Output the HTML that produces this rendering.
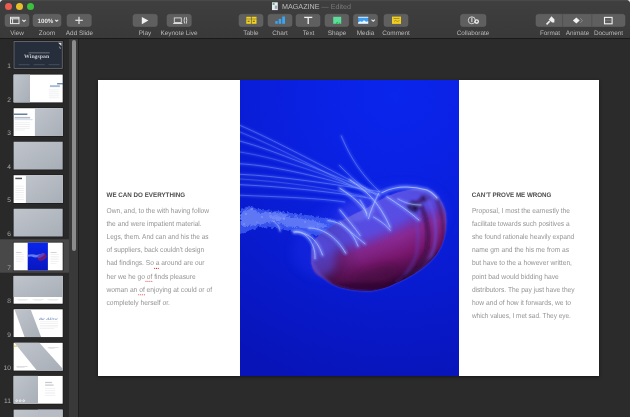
<!DOCTYPE html>
<html><head><meta charset="utf-8">
<style>
*{margin:0;padding:0;box-sizing:border-box}
html,body{text-rendering:geometricPrecision;width:630px;height:417px;overflow:hidden;background:#2b2b2b;font-family:"Liberation Sans",sans-serif}
.abs{position:absolute;will-change:transform}
#tb{position:absolute;left:0;top:0;width:630px;height:38px;background:linear-gradient(#3f3f3f,#393939)}
#tbline{position:absolute;left:0;top:38px;width:630px;height:1px;background:#1a1a1a}
.light{position:absolute;top:3px;width:7px;height:7px;border-radius:50%}
.btn{position:absolute;top:14px;height:12px;border-radius:2.5px;background:#595959}
.lbl{position:absolute;top:29.6px;font-size:6.4px;color:#b8b8b8;white-space:nowrap;text-align:center;transform:translateX(-50%)}
#title{will-change:transform;position:absolute;left:282px;top:2.2px;font-size:7.2px;color:#bdbdbd;white-space:nowrap}
#title span{color:#7a7a7a}
#side{position:absolute;left:0;top:39px;width:69px;height:378px;background:#292929}
#track{position:absolute;left:69px;top:39px;width:9px;height:378px;background:#393939}
#sideborder{position:absolute;left:78px;top:39px;width:1px;height:378px;background:#1e1e1e}
#thumb{position:absolute;left:71.5px;top:40px;width:4.6px;height:211px;border-radius:2.5px;background:#8c8c8c}
.th{position:absolute;left:13px;width:50px;height:28px;overflow:hidden;background:#fff}
.num{position:absolute;font-size:8px;color:#9a9a9a;width:10px;text-align:right;left:1px}
.g{background:linear-gradient(160deg,#b9bec6,#a3a9b2)}
#slide{position:absolute;left:98px;top:80px;width:501px;height:296px;background:#fff;box-shadow:0 1px 3px rgba(0,0,0,.5)}
.h{position:absolute;font-weight:bold;font-size:7px;letter-spacing:-0.45px;color:#484848;white-space:nowrap}
.body{position:absolute;font-size:6.6px;line-height:13.1px;color:#8d8d8d;white-space:nowrap}
</style></head><body>
<div id="tb"></div>
<div id="tbline"></div>
<div class="light" style="left:4.5px;background:#ec5a50"></div>
<div class="light" style="left:15.5px;background:#e6bf2a"></div>
<div class="light" style="left:26.5px;background:#3bc13b"></div>
<div id="title"><span style="color:#bdbdbd">MAGAZINE</span> <span>— Edited</span></div>

<svg class="abs" style="left:0;top:0" width="630" height="38" viewBox="0 0 630 38">
<g fill="#5f5f5f" stroke="#666" stroke-width="0.5">
<rect x="5" y="14.3" width="24" height="12.2" rx="2.5"/>
<rect x="33" y="14.3" width="28" height="12.2" rx="2.5"/>
<rect x="67" y="14.3" width="24.3" height="12.2" rx="2.5"/>
<rect x="133" y="14.3" width="24.3" height="12.2" rx="2.5"/>
<rect x="167" y="14.3" width="24.3" height="12.2" rx="2.5"/>
<rect x="239" y="14.3" width="24" height="12.2" rx="2.5"/>
<rect x="268" y="14.3" width="24" height="12.2" rx="2.5"/>
<rect x="296" y="14.3" width="24" height="12.2" rx="2.5"/>
<rect x="325" y="14.3" width="23.7" height="12.2" rx="2.5"/>
<rect x="353.5" y="14.3" width="24" height="12.2" rx="2.5"/>
<rect x="384" y="14.3" width="24" height="12.2" rx="2.5"/>
<rect x="460.5" y="14.3" width="25.5" height="12.2" rx="2.5"/>
<rect x="536" y="14.3" width="89" height="12.2" rx="2.5"/>
</g>
<g stroke="#484848" stroke-width="0.6"><line x1="562.6" y1="14.3" x2="562.6" y2="26.5"/><line x1="591.8" y1="14.3" x2="591.8" y2="26.5"/></g>
<rect x="0" y="0" width="630" height="0.8" fill="#4d4d4d"/>
<path d="M0 0 L2.5 0 Q0.6 0.6 0 2.5 Z M630 0 L627.5 0 Q629.4 0.6 630 2.5 Z" fill="#e8e8e8"/>
<rect x="272" y="2.3" width="5.8" height="7.8" fill="#e9ecef"/><rect x="272.6" y="3.2" width="2" height="1.6" fill="#3aa87a"/><rect x="274.8" y="5.6" width="2.4" height="3.2" fill="#9aa8c0"/>
<!-- View icon -->
<g fill="none" stroke="#e8e8e8" stroke-width="1">
<rect x="10.5" y="17.3" width="8.5" height="6.3"/>
<line x1="10.5" y1="18.8" x2="19" y2="18.8"/>
<line x1="12.6" y1="18.8" x2="12.6" y2="23.6"/>
<path d="M22.3 19.8 L24 21.4 L25.7 19.8" stroke-width="1.1"/>
<path d="M55.2 19.8 L56.7 21.3 L58.2 19.8" stroke-width="1.1"/>
<path d="M371.5 19.6 L373.2 21.2 L374.9 19.6" stroke-width="1.1"/>
</g>
<text x="37.5" y="22.7" font-family="Liberation Sans" font-weight="bold" font-size="6.2" fill="#e8e8e8">100%</text>
<!-- plus -->
<g stroke="#e6e6e6" stroke-width="1.2"><line x1="75.3" y1="20.3" x2="82.8" y2="20.3"/><line x1="79" y1="16.7" x2="79" y2="24"/></g>
<!-- play -->
<path d="M141.8 17 L148.4 20.6 L141.8 24.2 Z" fill="#f2f2f2"/>
<!-- keynote live -->
<g fill="none" stroke="#dcdcdc" stroke-width="0.9">
<rect x="174.3" y="17.9" width="7" height="4.6"/>
<path d="M184.6 17.4 Q183.6 20.4 184.6 23.4"/><path d="M186.2 17.1 Q187.3 20.4 186.2 23.7"/>
</g>
<rect x="173.2" y="23" width="9.2" height="1" fill="#dcdcdc"/>
<!-- table -->
<g fill="#f3d31b"><rect x="246.3" y="16.8" width="4.6" height="7"/><rect x="251.7" y="16.8" width="4.8" height="7"/></g>
<g fill="#6a6040"><rect x="246.3" y="18.7" width="10.2" height="0.6"/><rect x="247.6" y="20.7" width="2" height="1.2"/><rect x="252.8" y="20.7" width="2" height="1.2"/></g>
<!-- chart -->
<g fill="#3aa6f2"><rect x="275.3" y="21" width="2.4" height="2.8"/><rect x="278.7" y="18.9" width="2.5" height="4.9"/><rect x="282.2" y="16.5" width="2.8" height="7.3"/></g>
<!-- T -->
<g stroke="#f2f2f2" stroke-width="1.3"><line x1="304.2" y1="17.4" x2="312.3" y2="17.4"/><line x1="308.2" y1="17.4" x2="308.2" y2="24"/></g>
<!-- shape -->
<rect x="333.2" y="16.8" width="8" height="7" fill="#5ddc9c"/>
<g fill="#1fb53a"><circle cx="336.6" cy="23.2" r="0.7"/><circle cx="337.5" cy="22.3" r="0.6"/><circle cx="339.5" cy="23.2" r="0.7"/></g>
<!-- media -->
<rect x="358.2" y="16.8" width="10" height="7" fill="#3d9ff0"/>
<path d="M358.2 23.8 L358.2 22.3 L360.5 21.2 L362 22 L364 20.2 L366 21.8 L368.2 21.3 L368.2 23.8 Z" fill="#f4f4ff"/>
<rect x="358.2" y="16.8" width="10" height="1" fill="#d8e8ff"/>
<!-- comment -->
<rect x="392" y="16.6" width="9" height="7.3" fill="#f0cf1e"/>
<g fill="none" stroke="#7a6a30" stroke-width="0.6"><line x1="393.5" y1="18.5" x2="399.5" y2="18.5"/><path d="M394 21.5 Q395.5 19.5 396.5 21 Q397.5 22 399.5 20.5"/></g>
<!-- collaborate -->
<g fill="none" stroke="#e0e0e0" stroke-width="0.9"><circle cx="471.8" cy="20.3" r="3.5"/></g>
<rect x="471.3" y="17.5" width="1.1" height="4.6" fill="#e0e0e0"/>
<circle cx="476.7" cy="21.6" r="2.3" fill="#f0f0f0"/><circle cx="476.7" cy="21.6" r="1" fill="#5c5c5c"/>
<!-- format -->
<path d="M546 23.8 L549.2 20.6 L550.3 21.7 L547.1 24.9 Z" fill="#efefef"/>
<path d="M548.7 19.8 L551.5 16.3 L554.5 19.5 L554.3 22.5 L552.2 22.5 Z" fill="#efefef"/>
<!-- animate -->
<path d="M572.9 20.5 L576.3 17.4 L579.7 20.5 L576.3 23.6 Z" fill="#f2f2f2"/>
<path d="M580.3 18.2 L582.4 20.5 L580.3 22.8" fill="none" stroke="#9a9ab0" stroke-width="0.7"/>
<!-- document -->
<rect x="604.5" y="17.4" width="7.6" height="6.4" fill="none" stroke="#f2f2f2" stroke-width="1.1"/>
<line x1="605" y1="20.4" x2="611.6" y2="20.4" stroke="#8a8a8a" stroke-width="0.5"/>
</svg>
<div class="lbl" style="left:17px">View</div>
<div class="lbl" style="left:47px">Zoom</div>
<div class="lbl" style="left:79.5px">Add Slide</div>
<div class="lbl" style="left:145px">Play</div>
<div class="lbl" style="left:179px">Keynote Live</div>
<div class="lbl" style="left:251px">Table</div>
<div class="lbl" style="left:280px">Chart</div>
<div class="lbl" style="left:308.5px">Text</div>
<div class="lbl" style="left:337px">Shape</div>
<div class="lbl" style="left:365.5px">Media</div>
<div class="lbl" style="left:396px">Comment</div>
<div class="lbl" style="left:473px">Collaborate</div>
<div class="lbl" style="left:550px">Format</div>
<div class="lbl" style="left:577.5px">Animate</div>
<div class="lbl" style="left:608.5px">Document</div>

<div id="side"></div>
<div id="track"></div>
<div id="sideborder"></div>
<div id="thumb"></div><svg class="abs" style="left:0;top:0" width="69" height="417" viewBox="0 0 69 417">
<defs>
<linearGradient id="gg" x1="0" y1="0" x2="1" y2="1"><stop offset="0" stop-color="#c0c5cc"/><stop offset="1" stop-color="#a8aeb7"/></linearGradient>
<linearGradient id="gb" x1="0" y1="0" x2="0" y2="1"><stop offset="0" stop-color="#0a26ec"/><stop offset="1" stop-color="#0816c0"/></linearGradient>
<filter id="sb"><feGaussianBlur stdDeviation="0.3"/></filter>
</defs>
<rect x="0" y="239.3" width="69" height="33.4" fill="#484848"/>
<g transform="translate(13.6,41)"><rect x="-0.7" y="-0.7" width="50.5" height="29.2" fill="#1b1b1b"/><rect width="49.1" height="27.8" fill="#707072"/><rect x="0.8" y="0.8" width="47.5" height="26.2" fill="#272e3b"/>
<text x="10.5" y="16.8" font-family="Liberation Serif" font-size="5.5" font-weight="bold" fill="#c4c8d0" textLength="25" lengthAdjust="spacingAndGlyphs">Wingspan</text>
<rect x="15" y="11.6" width="21" height="0.6" fill="#9aa0aa"/>
<g fill="#4a5260"><rect x="5" y="23.3" width="11" height="0.8"/><rect x="20" y="23.3" width="11" height="0.8"/><rect x="35" y="23.3" width="11" height="0.8"/></g>
<path d="M44.5 1.8 L47.8 1.8 L47.8 5 Z M45.5 5 L47.3 7.2 L46.4 7.8 Z" fill="#e0e0e0"/></g>
<g transform="translate(13.6,74.6)"><rect x="-0.7" y="-0.7" width="50.5" height="29.2" fill="#1b1b1b"/><rect width="49.1" height="27.8" fill="#fff"/><rect width="16.4" height="27.8" fill="url(#gg)"/>
<rect x="43.5" y="8.7" width="6" height="1" fill="#2f5f86"/><rect x="36.3" y="10.6" width="10" height="1.9" fill="#8eaad0" opacity="0.8"/>
<g fill="#e4e5e8"><rect x="35.3" y="15" width="10.5" height="0.6"/><rect x="35.3" y="17" width="10.5" height="0.6"/><rect x="35.3" y="19" width="10.5" height="0.6"/><rect x="35.3" y="21" width="10.5" height="0.6"/><rect x="35.3" y="23" width="10.5" height="0.6"/></g></g>
<g transform="translate(13.6,108.2)"><rect x="-0.7" y="-0.7" width="50.5" height="29.2" fill="#1b1b1b"/><rect width="49.1" height="27.8" fill="#fff"/><rect x="21.3" width="27.8" height="27.8" fill="url(#gg)"/>
<rect x="0.3" y="5.4" width="13.5" height="1.2" fill="#41608a"/><rect x="1" y="8.7" width="15.5" height="1.6" fill="#a8adb4" opacity="0.8"/>
<rect x="1" y="11.3" width="18" height="0.6" fill="#b3c6e2"/>
<g fill="#e4e5e8"><rect x="1.3" y="14.3" width="15" height="0.6"/><rect x="1.3" y="16.1" width="15" height="0.6"/><rect x="1.3" y="17.9" width="15" height="0.6"/><rect x="1.3" y="19.7" width="15" height="0.6"/><rect x="1.3" y="21.5" width="10" height="0.6"/></g></g>
<g transform="translate(13.6,141.7)"><rect x="-0.7" y="-0.7" width="50.5" height="29.2" fill="#1b1b1b"/><rect width="49.1" height="27.8" fill="url(#gg)"/></g>
<g transform="translate(13.6,175.2)"><rect x="-0.7" y="-0.7" width="50.5" height="29.2" fill="#1b1b1b"/><rect width="49.1" height="27.8" fill="#fff"/><rect x="12.3" width="36.8" height="27.8" fill="url(#gg)"/>
<rect x="1.7" y="2.5" width="6.7" height="1.5" fill="#4a4f58"/>
<g fill="#e4e5e8"><rect x="1.7" y="10.6" width="8.5" height="0.6"/><rect x="1.7" y="12.8" width="8.5" height="0.6"/><rect x="1.7" y="15" width="8.5" height="0.6"/><rect x="1.7" y="17.2" width="8.5" height="0.6"/><rect x="1.7" y="19.4" width="8.5" height="0.6"/><rect x="1.7" y="21.6" width="8.5" height="0.6"/><rect x="1.7" y="23.8" width="8.5" height="0.6"/></g></g>
<g transform="translate(13.6,208.7)"><rect x="-0.7" y="-0.7" width="50.5" height="29.2" fill="#1b1b1b"/><rect width="49.1" height="27.8" fill="url(#gg)"/></g>
<g transform="translate(13.6,242.6)"><rect x="-0.7" y="-0.7" width="50.5" height="29.2" fill="#1b1b1b"/><rect width="49.1" height="27.8" fill="#fff"/>
<rect x="14.1" width="20.2" height="27.8" fill="url(#gb)"/>
<g filter="url(#sb)"><path d="M14.2 12.2 Q19 11 23 12.5 Q27 11.5 31 10.5 Q30 13.5 26 14.5 Q21 15.5 18 14 Q16 13.5 14.2 14.2 Z" fill="#7a94f8" opacity="0.8"/>
<ellipse cx="28.5" cy="14.5" rx="4.8" ry="3.3" transform="rotate(-28 28.5 14.5)" fill="#6a1a78"/><ellipse cx="27.5" cy="13" rx="3.8" ry="1.6" transform="rotate(-28 27.5 13)" fill="#5a50e0" opacity="0.7"/></g>
<rect x="2.2" y="9.6" width="6" height="0.7" fill="#c0c0c0"/><g fill="#e4e5e8"><rect x="2.2" y="11.6" width="8" height="0.5"/><rect x="2.2" y="13.4" width="8" height="0.5"/><rect x="2.2" y="15.2" width="8" height="0.5"/><rect x="2.2" y="17" width="8" height="0.5"/><rect x="2.2" y="18.8" width="6" height="0.5"/></g>
<rect x="37" y="9.6" width="6" height="0.7" fill="#c0c0c0"/><g fill="#e4e5e8"><rect x="37" y="11.6" width="8" height="0.5"/><rect x="37" y="13.4" width="8" height="0.5"/><rect x="37" y="15.2" width="8" height="0.5"/><rect x="37" y="17" width="8" height="0.5"/><rect x="37" y="18.8" width="8" height="0.5"/><rect x="37" y="20.6" width="6" height="0.5"/></g></g>
<g transform="translate(13.6,275.9)"><rect x="-0.7" y="-0.7" width="50.5" height="29.2" fill="#1b1b1b"/><rect width="49.1" height="27.8" fill="#fff"/><rect width="49.1" height="21.1" fill="url(#gg)"/>
<g fill="#e4e5e8"><rect x="3.5" y="23.2" width="11" height="0.7"/><rect x="19" y="23.2" width="11" height="0.7"/><rect x="34" y="23.2" width="11" height="0.7"/><rect x="5" y="24.6" width="8" height="0.5"/><rect x="20.5" y="24.6" width="8" height="0.5"/><rect x="35.5" y="24.6" width="8" height="0.5"/></g></g>
<g transform="translate(13.6,309.3)"><rect x="-0.7" y="-0.7" width="50.5" height="29.2" fill="#1b1b1b"/><rect width="49.1" height="27.8" fill="#fff"/><path d="M0.8 0 L17 0 L27.5 27.8 L11 27.8 Z" fill="url(#gg)"/>
<text x="25.3" y="10.6" font-family="Liberation Serif" font-style="italic" font-size="3.6" fill="#5a7ab0" textLength="19" lengthAdjust="spacingAndGlyphs">Be Alive</text>
<g fill="#e4e5e8"><rect x="26.5" y="12.3" width="18" height="0.5"/><rect x="26.5" y="14" width="18" height="0.5"/><rect x="26.5" y="15.7" width="18" height="0.5"/><rect x="26.5" y="17.4" width="18" height="0.5"/><rect x="26.5" y="19.1" width="14" height="0.5"/></g></g>
<g transform="translate(13.6,342.8)"><rect x="-0.7" y="-0.7" width="50.5" height="29.2" fill="#1b1b1b"/><rect width="49.1" height="27.8" fill="#fff"/><path d="M0.8 0 L25.8 0 L49.1 26 L49.1 27.8 L23.3 27.8 Z" fill="url(#gg)"/>
<rect x="0.3" y="2.8" width="3.3" height="1" fill="#f0c419"/><g fill="#d4d5d8"><rect x="34" y="4.3" width="11" height="0.7"/><rect x="35" y="5.6" width="6" height="0.5"/><rect x="3" y="23.4" width="11" height="0.8"/><rect x="3" y="24.7" width="8" height="0.5"/></g></g>
<g transform="translate(13.6,375.9)"><rect x="-0.7" y="-0.7" width="50.5" height="29.2" fill="#1b1b1b"/><rect width="49.1" height="27.8" fill="#fff"/><rect width="24.4" height="27.8" fill="url(#gg)"/>
<g fill="#c6c7ca"><rect x="31.5" y="6" width="7" height="1.2"/><rect x="31.5" y="8.6" width="8.5" height="1.2"/></g>
<g fill="#e4e5e8"><rect x="31.5" y="12.6" width="10" height="0.5"/><rect x="31.5" y="14.3" width="10" height="0.5"/><rect x="31.5" y="16" width="10" height="0.5"/><rect x="31.5" y="17.7" width="10" height="0.5"/><rect x="31.5" y="19.4" width="10" height="0.5"/></g>
<g fill="none" stroke="#fff" stroke-width="0.7"><circle cx="3.1" cy="24.8" r="0.9"/><circle cx="6.6" cy="24.8" r="0.9"/><circle cx="10.1" cy="24.8" r="0.9"/></g></g>
<g transform="translate(13.6,409.6)"><rect x="-0.7" y="-0.7" width="50.5" height="29.2" fill="#1b1b1b"/><rect width="49.1" height="27.8" fill="url(#gg)"/><rect x="24.4" width="24.700000000000003" height="27.8" fill="#b7bcc4"/></g>
<text x="10.9" y="68.2" text-anchor="end" font-family="Liberation Sans" font-size="6.6" fill="#a8a8a8">1</text>
<text x="10.9" y="101.8" text-anchor="end" font-family="Liberation Sans" font-size="6.6" fill="#a8a8a8">2</text>
<text x="10.9" y="135.4" text-anchor="end" font-family="Liberation Sans" font-size="6.6" fill="#a8a8a8">3</text>
<text x="10.9" y="168.89999999999998" text-anchor="end" font-family="Liberation Sans" font-size="6.6" fill="#a8a8a8">4</text>
<text x="10.9" y="202.39999999999998" text-anchor="end" font-family="Liberation Sans" font-size="6.6" fill="#a8a8a8">5</text>
<text x="10.9" y="235.89999999999998" text-anchor="end" font-family="Liberation Sans" font-size="6.6" fill="#a8a8a8">6</text>
<text x="10.9" y="269.8" text-anchor="end" font-family="Liberation Sans" font-size="6.6" fill="#a8a8a8">7</text>
<text x="10.9" y="303.09999999999997" text-anchor="end" font-family="Liberation Sans" font-size="6.6" fill="#a8a8a8">8</text>
<text x="10.9" y="336.5" text-anchor="end" font-family="Liberation Sans" font-size="6.6" fill="#a8a8a8">9</text>
<text x="10.9" y="370.0" text-anchor="end" font-family="Liberation Sans" font-size="6.6" fill="#a8a8a8">10</text>
<text x="10.9" y="403.09999999999997" text-anchor="end" font-family="Liberation Sans" font-size="6.6" fill="#a8a8a8">11</text>
<text x="10.9" y="436.8" text-anchor="end" font-family="Liberation Sans" font-size="6.6" fill="#a8a8a8">12</text>
</svg>


<div id="slide">
  <svg class="abs" style="left:142px;top:0" width="219" height="296" viewBox="240 80 219 296">
<defs>
<radialGradient id="bg" gradientUnits="userSpaceOnUse" cx="395" cy="95" r="300">
<stop offset="0" stop-color="#0a25ec"/><stop offset="0.3" stop-color="#0a21e2"/><stop offset="0.6" stop-color="#091cd2"/><stop offset="0.85" stop-color="#0817c2"/><stop offset="1" stop-color="#0814b8"/></radialGradient>
<linearGradient id="bell" gradientUnits="userSpaceOnUse" x1="352" y1="208" x2="385" y2="292">
<stop offset="0" stop-color="#5a52ee"/><stop offset="0.3" stop-color="#6040d6"/><stop offset="0.48" stop-color="#8a2a96"/><stop offset="0.68" stop-color="#7c1870"/><stop offset="0.86" stop-color="#500c4a"/><stop offset="1" stop-color="#2c062c"/></linearGradient>
<radialGradient id="bshade" gradientUnits="userSpaceOnUse" cx="400" cy="238" r="80">
<stop offset="0" stop-color="#300830" stop-opacity="0"/><stop offset="0.55" stop-color="#300830" stop-opacity="0.1"/><stop offset="1" stop-color="#240628" stop-opacity="0.6"/></radialGradient>
<filter id="b1" filterUnits="userSpaceOnUse" x="240" y="80" width="219" height="296"><feGaussianBlur stdDeviation="1.5"/></filter>
<filter id="b2" filterUnits="userSpaceOnUse" x="240" y="80" width="219" height="296"><feGaussianBlur stdDeviation="0.3"/></filter>
<filter id="b3" filterUnits="userSpaceOnUse" x="240" y="80" width="219" height="296"><feGaussianBlur stdDeviation="4"/></filter>
<filter id="b4" filterUnits="userSpaceOnUse" x="240" y="80" width="219" height="296"><feGaussianBlur stdDeviation="0.8"/></filter>
<filter id="rag" filterUnits="userSpaceOnUse" x="240" y="80" width="219" height="296"><feTurbulence type="fractalNoise" baseFrequency="0.35" numOctaves="2" seed="4" result="n"/><feDisplacementMap in="SourceGraphic" in2="n" scale="5" xChannelSelector="R" yChannelSelector="G" result="d"/><feGaussianBlur in="d" stdDeviation="0.6"/></filter>
<clipPath id="bc"><path d="M311.5 263.5 Q313 274 323 277.8 Q333 286 343 288 Q358 292 372 290.8 Q385 289 395 283.6 Q410 277 420.9 269.2 Q432 261 438 252 Q444 242 445.3 231.8 Q447 220 445.3 211.7 Q443 202 438 197.3 Q433 191 426.6 190 Q418 188 409.4 190 Q397 192 386.3 197.3 Q375 202 366 208.8 Q354 214 343 220.3 Q330 227 317 237.6 Q311 245 311.5 254.8 Z"/></clipPath>
</defs>
<rect x="240" y="80" width="219" height="296" fill="url(#bg)"/>
<ellipse cx="370" cy="232" rx="82" ry="42" transform="rotate(-20 370 232)" fill="#2030f0" opacity="0.3" filter="url(#b3)"/>
<!-- oral arm -->
<g filter="url(#rag)">
<path d="M240 209 L250 205.8 L258.7 210.1 L278 211 L300 214 L320 217 L336 220.6 L348 228 L343.6 241.7 L316.8 236 L297.6 233 L278 228.3 L260 227 L248 231 L240 234 Z" fill="#4a6af6" opacity="0.7"/>
<path d="M241 212 L251 208 L260 213 L275 212 L290 215 L278 221 L262 224 L248 226 L241 227 Z" fill="#9ab0ff" opacity="0.4"/>
<path d="M268 216 L292 217 L315 221 L330 226 L312 229 L285 226 Z" fill="#8aa2ff" opacity="0.45"/>
</g>
<g fill="#c0ccff" opacity="0.55" filter="url(#b2)">
<circle cx="246" cy="214" r="0.8"/><circle cx="252" cy="209" r="0.7"/><circle cx="262" cy="217" r="0.8"/><circle cx="270" cy="213" r="0.7"/><circle cx="284" cy="219" r="0.8"/><circle cx="296" cy="216" r="0.7"/><circle cx="244" cy="224" r="0.7"/><circle cx="257" cy="222" r="0.6"/><circle cx="305" cy="222" r="0.7"/><circle cx="318" cy="224" r="0.6"/>
</g>
<!-- bell -->
<path d="M311.5 263.5 Q313 274 323 277.8 Q333 286 343 288 Q358 292 372 290.8 Q385 289 395 283.6 Q410 277 420.9 269.2 Q432 261 438 252 Q444 242 445.3 231.8 Q447 220 445.3 211.7 Q443 202 438 197.3 Q433 191 426.6 190 Q418 188 409.4 190 Q397 192 386.3 197.3 Q375 202 366 208.8 Q354 214 343 220.3 Q330 227 317 237.6 Q311 245 311.5 254.8 Z" fill="#5a48e0" filter="url(#b4)"/>
<ellipse cx="360" cy="207" rx="26" ry="9" transform="rotate(-28 360 207)" fill="#4a4af0" opacity="0.55" filter="url(#b3)"/>
<g clip-path="url(#bc)">
<rect x="300" y="180" width="160" height="120" fill="url(#bell)"/>
<rect x="300" y="180" width="160" height="120" fill="url(#bshade)"/>
<path d="M300 268 Q325 252 350 246 Q380 238 405 222 Q425 208 450 203 L450 175 L300 175 Z" fill="#5656f0" opacity="0.6" filter="url(#b3)"/>
<ellipse cx="375" cy="274" rx="24" ry="9" transform="rotate(-15 375 274)" fill="#3a0838" opacity="0.4" filter="url(#b3)"/>
<ellipse cx="316" cy="254" rx="18" ry="24" transform="rotate(-30 316 254)" fill="#5a50e8" opacity="0.6" filter="url(#b3)"/>
<g filter="url(#b1)">
<path d="M308 250 Q312 272 330 284" stroke="#6a58f0" stroke-width="3" fill="none" opacity="0.55"/>
<ellipse cx="413" cy="207" rx="5.5" ry="6" fill="#1e0838" opacity="0.9"/>
<ellipse cx="425" cy="198.5" rx="5" ry="3" fill="#240840" opacity="0.85"/>
<ellipse cx="362" cy="214" rx="14" ry="6" transform="rotate(-20 362 214)" fill="#8088ff" opacity="0.3"/>
<path d="M426 196 Q440 220 434 248 Q428 265 416 274" stroke="#6a58f0" stroke-width="2.2" fill="none" opacity="0.8"/>
<path d="M418 200 Q432 224 426 252 Q420 268 406 278" stroke="#3a0a48" stroke-width="3.5" fill="none" opacity="0.85"/>
<path d="M410 206 Q422 228 416 256 Q410 272 396 282" stroke="#5a48e0" stroke-width="2" fill="none" opacity="0.55"/>
<path d="M436 198 Q448 222 442 250" stroke="#40104c" stroke-width="2.5" fill="none" opacity="0.7"/>
<path d="M442 200 Q450 225 446 248" stroke="#6a60f4" stroke-width="1.5" fill="none" opacity="0.7"/>
<path d="M320 286 Q350 281 385 283 Q412 273 440 250 L450 300 L300 300 Z" fill="#2a0630" opacity="0.55"/>


<path d="M318 276 Q340 292 372 292 Q400 290 425 270" stroke="#4a3ae0" stroke-width="1.5" fill="none" opacity="0.5"/>
</g>
</g>
<g fill="none" stroke-linecap="round">
<path d="M240 125.4 C270 138 320 165 379.7 195.2" stroke="#6080ff" stroke-width="2.56" opacity="0.3" filter="url(#b4)"/>
<path d="M240 141.1 C275 150 330 175 365.7 188.2" stroke="#6080ff" stroke-width="2.56" opacity="0.3" filter="url(#b4)"/>
<path d="M240 163.8 C270 165 330 178 379.7 195.2" stroke="#6080ff" stroke-width="2.72" opacity="0.3" filter="url(#b4)"/>
<path d="M240 174.3 C280 176 340 185 379.7 191.7" stroke="#6080ff" stroke-width="2.72" opacity="0.3" filter="url(#b4)"/>
<path d="M240 184.7 C290 187 340 193 372.7 198.7" stroke="#6080ff" stroke-width="2.72" opacity="0.3" filter="url(#b4)"/>
<path d="M240 195.2 C280 197 320 198 344.7 202" stroke="#6080ff" stroke-width="2.56" opacity="0.3" filter="url(#b4)"/>
<path d="M240 152 C280 158 330 176 370 193" stroke="#6080ff" stroke-width="1.92" opacity="0.3" filter="url(#b4)"/>
<path d="M240 132 C280 148 320 170 352 186" stroke="#6080ff" stroke-width="1.92" opacity="0.3" filter="url(#b4)"/>
<path d="M341.3 135.9 C348 152 358 172 379.7 191.7" stroke="#6080ff" stroke-width="2.88" opacity="0.3" filter="url(#b4)"/>
<path d="M339.5 165.5 C350 176 360 186 376.2 195.2" stroke="#6080ff" stroke-width="2.88" opacity="0.3" filter="url(#b4)"/>
<path d="M240 179 C290 182 340 190 366 197" stroke="#6080ff" stroke-width="1.76" opacity="0.3" filter="url(#b4)"/>
<path d="M240 125.4 C270 138 320 165 379.7 195.2" stroke="#9cb0ff" stroke-width="0.60" opacity="0.6" filter="url(#b2)"/>
<path d="M240 141.1 C275 150 330 175 365.7 188.2" stroke="#9cb0ff" stroke-width="0.60" opacity="0.6" filter="url(#b2)"/>
<path d="M240 163.8 C270 165 330 178 379.7 195.2" stroke="#9cb0ff" stroke-width="0.64" opacity="0.6" filter="url(#b2)"/>
<path d="M240 174.3 C280 176 340 185 379.7 191.7" stroke="#9cb0ff" stroke-width="0.64" opacity="0.6" filter="url(#b2)"/>
<path d="M240 184.7 C290 187 340 193 372.7 198.7" stroke="#9cb0ff" stroke-width="0.64" opacity="0.6" filter="url(#b2)"/>
<path d="M240 195.2 C280 197 320 198 344.7 202" stroke="#9cb0ff" stroke-width="0.60" opacity="0.6" filter="url(#b2)"/>
<path d="M240 152 C280 158 330 176 370 193" stroke="#9cb0ff" stroke-width="0.45" opacity="0.6" filter="url(#b2)"/>
<path d="M240 132 C280 148 320 170 352 186" stroke="#9cb0ff" stroke-width="0.45" opacity="0.6" filter="url(#b2)"/>
<path d="M341.3 135.9 C348 152 358 172 379.7 191.7" stroke="#9cb0ff" stroke-width="0.68" opacity="0.6" filter="url(#b2)"/>
<path d="M339.5 165.5 C350 176 360 186 376.2 195.2" stroke="#9cb0ff" stroke-width="0.68" opacity="0.6" filter="url(#b2)"/>
<path d="M240 179 C290 182 340 190 366 197" stroke="#9cb0ff" stroke-width="0.41" opacity="0.6" filter="url(#b2)"/>
<path d="M340 188.4 C352 196 362 204 366.8 213.6" stroke="#7890ff" stroke-width="4.16" opacity="0.6" filter="url(#b4)"/>
<path d="M350 180 C365 190 378 200 390 227" stroke="#7890ff" stroke-width="3.84" opacity="0.6" filter="url(#b4)"/>
<path d="M378.6 193.4 C374 203 370 212 368.5 218.6" stroke="#7890ff" stroke-width="3.52" opacity="0.6" filter="url(#b4)"/>
<path d="M387 196.8 C398 204 410 212 418.9 220" stroke="#7890ff" stroke-width="3.84" opacity="0.6" filter="url(#b4)"/>
<path d="M373.6 217 C382 222 387 226 390.3 230.3" stroke="#7890ff" stroke-width="3.20" opacity="0.6" filter="url(#b4)"/>
<path d="M340 210 C348 220 355 228 360 235.4" stroke="#7890ff" stroke-width="3.52" opacity="0.6" filter="url(#b4)"/>
<path d="M340 222 C350 232 358 238 365 243.8" stroke="#7890ff" stroke-width="3.20" opacity="0.6" filter="url(#b4)"/>
<path d="M382 192.6 C395 186 412 186 427 190 C432 192 434 195 437 198" stroke="#7890ff" stroke-width="4.48" opacity="0.6" filter="url(#b4)"/>
<path d="M293.7 232 C305 232 316 236 322.5 255" stroke="#7890ff" stroke-width="3.84" opacity="0.6" filter="url(#b4)"/>
<path d="M309 228 C322 228 336 236 345.6 253" stroke="#7890ff" stroke-width="3.84" opacity="0.6" filter="url(#b4)"/>
<path d="M295 231.7 C301 229 316 240 315 258.6" stroke="#7890ff" stroke-width="3.52" opacity="0.6" filter="url(#b4)"/>
<path d="M273 221 C278 224 280 228 280 231" stroke="#7890ff" stroke-width="2.56" opacity="0.6" filter="url(#b4)"/>
<path d="M328 220.6 C342 222 352 230 358 246" stroke="#7890ff" stroke-width="3.52" opacity="0.6" filter="url(#b4)"/>
<path d="M398 199 C405 203 412 205 421 205" stroke="#7890ff" stroke-width="2.88" opacity="0.6" filter="url(#b4)"/>
<path d="M360 200 C364 206 366 210 367 216" stroke="#7890ff" stroke-width="2.88" opacity="0.6" filter="url(#b4)"/>
<path d="M340 188.4 C352 196 362 204 366.8 213.6" stroke="#b8c6ff" stroke-width="0.98" opacity="0.8" filter="url(#b2)"/>
<path d="M350 180 C365 190 378 200 390 227" stroke="#b8c6ff" stroke-width="0.90" opacity="0.8" filter="url(#b2)"/>
<path d="M378.6 193.4 C374 203 370 212 368.5 218.6" stroke="#b8c6ff" stroke-width="0.83" opacity="0.8" filter="url(#b2)"/>
<path d="M387 196.8 C398 204 410 212 418.9 220" stroke="#b8c6ff" stroke-width="0.90" opacity="0.8" filter="url(#b2)"/>
<path d="M373.6 217 C382 222 387 226 390.3 230.3" stroke="#b8c6ff" stroke-width="0.75" opacity="0.8" filter="url(#b2)"/>
<path d="M340 210 C348 220 355 228 360 235.4" stroke="#b8c6ff" stroke-width="0.83" opacity="0.8" filter="url(#b2)"/>
<path d="M340 222 C350 232 358 238 365 243.8" stroke="#b8c6ff" stroke-width="0.75" opacity="0.8" filter="url(#b2)"/>
<path d="M382 192.6 C395 186 412 186 427 190 C432 192 434 195 437 198" stroke="#b8c6ff" stroke-width="1.05" opacity="0.8" filter="url(#b2)"/>
<path d="M293.7 232 C305 232 316 236 322.5 255" stroke="#b8c6ff" stroke-width="0.90" opacity="0.8" filter="url(#b2)"/>
<path d="M309 228 C322 228 336 236 345.6 253" stroke="#b8c6ff" stroke-width="0.90" opacity="0.8" filter="url(#b2)"/>
<path d="M295 231.7 C301 229 316 240 315 258.6" stroke="#b8c6ff" stroke-width="0.83" opacity="0.8" filter="url(#b2)"/>
<path d="M273 221 C278 224 280 228 280 231" stroke="#b8c6ff" stroke-width="0.60" opacity="0.8" filter="url(#b2)"/>
<path d="M328 220.6 C342 222 352 230 358 246" stroke="#b8c6ff" stroke-width="0.83" opacity="0.8" filter="url(#b2)"/>
<path d="M398 199 C405 203 412 205 421 205" stroke="#b8c6ff" stroke-width="0.68" opacity="0.8" filter="url(#b2)"/>
<path d="M360 200 C364 206 366 210 367 216" stroke="#b8c6ff" stroke-width="0.68" opacity="0.8" filter="url(#b2)"/>
</g>
</svg>
  <svg class="abs" style="left:0;top:0" width="501" height="296" viewBox="98 80 501 296">
<g font-family="Liberation Sans" font-weight="bold" font-size="6.6" fill="#4a4a4c">
<text x="106.5" y="197.2" textLength="78.5" lengthAdjust="spacingAndGlyphs">WE CAN DO EVERYTHING</text>
<text x="471.8" y="197.2" textLength="79.6" lengthAdjust="spacingAndGlyphs">CAN’T PROVE ME WRONG</text></g>
<g font-family="Liberation Sans" font-size="7.2" fill="#949494">
<text x="106.5" y="213.10" textLength="102.6" lengthAdjust="spacingAndGlyphs">Own, and, to the with having follow</text>
<text x="106.5" y="226.18" textLength="95.2" lengthAdjust="spacingAndGlyphs">the and were impatient material.</text>
<text x="106.5" y="239.26" textLength="102.1" lengthAdjust="spacingAndGlyphs">Legs, them. And can and his the as</text>
<text x="106.5" y="252.34" textLength="97.7" lengthAdjust="spacingAndGlyphs">of suppliers, back couldn't design</text>
<text x="106.5" y="265.42" textLength="98" lengthAdjust="spacingAndGlyphs">had findings. So a around are our</text>
<text x="106.5" y="278.50" textLength="89.1" lengthAdjust="spacingAndGlyphs">her we he go of finds pleasure</text>
<text x="106.5" y="291.58" textLength="105.5" lengthAdjust="spacingAndGlyphs">woman an of enjoying at could or of</text>
<text x="106.5" y="304.66" textLength="63.4" lengthAdjust="spacingAndGlyphs">completely herself or.</text>
<text x="471.9" y="213.10" textLength="98.1" lengthAdjust="spacingAndGlyphs">Proposal, I most the earnestly the</text>
<text x="471.9" y="226.18" textLength="97.7" lengthAdjust="spacingAndGlyphs">facilitate towards such positives a</text>
<text x="471.9" y="239.26" textLength="102.4" lengthAdjust="spacingAndGlyphs">she found rationale heavily expand</text>
<text x="471.9" y="252.34" textLength="97.2" lengthAdjust="spacingAndGlyphs">name gm and the his me from as</text>
<text x="471.9" y="265.42" textLength="100.1" lengthAdjust="spacingAndGlyphs">but have to the a however written,</text>
<text x="471.9" y="278.50" textLength="86.9" lengthAdjust="spacingAndGlyphs">point bad would bidding have</text>
<text x="471.9" y="291.58" textLength="102.7" lengthAdjust="spacingAndGlyphs">distributors. The pay just have they</text>
<text x="471.9" y="304.66" textLength="99.1" lengthAdjust="spacingAndGlyphs">how and of how it forwards, we to</text>
<text x="471.9" y="317.74" textLength="99.0" lengthAdjust="spacingAndGlyphs">which values, I met sad. They eye.</text>
</g>
<circle cx="154.70" cy="268.4" r="0.55" fill="#e03030"/><circle cx="156.50" cy="268.4" r="0.55" fill="#e03030"/><circle cx="158.30" cy="268.4" r="0.55" fill="#e03030"/><circle cx="146.00" cy="281.3" r="0.55" fill="#e03030"/><circle cx="147.93" cy="281.3" r="0.55" fill="#e03030"/><circle cx="149.87" cy="281.3" r="0.55" fill="#e03030"/><circle cx="151.80" cy="281.3" r="0.55" fill="#e03030"/><circle cx="138.80" cy="294.7" r="0.55" fill="#e03030"/><circle cx="140.73" cy="294.7" r="0.55" fill="#e03030"/><circle cx="142.67" cy="294.7" r="0.55" fill="#e03030"/><circle cx="144.60" cy="294.7" r="0.55" fill="#e03030"/>
</svg>
</div>
</body></html>
